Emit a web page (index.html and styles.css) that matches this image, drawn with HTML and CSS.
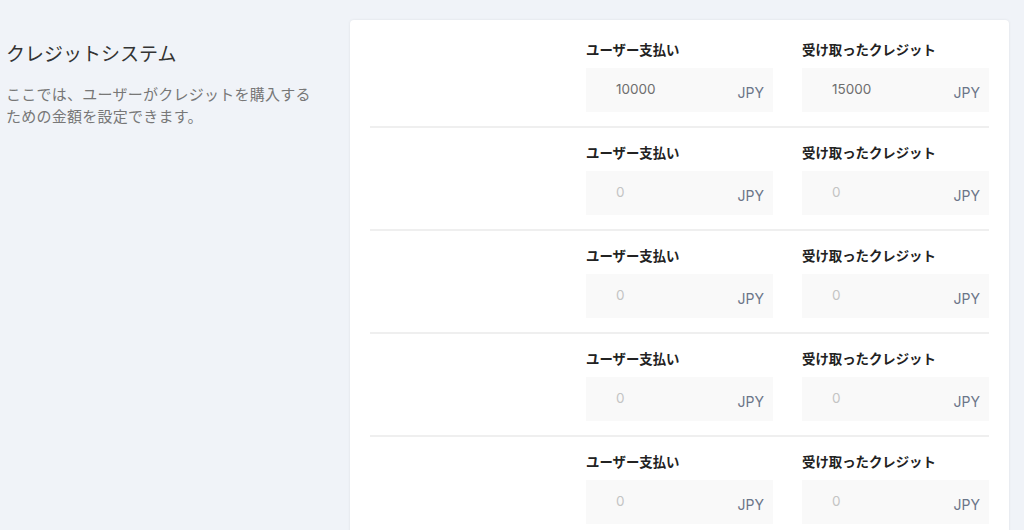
FILE: index.html
```html
<!DOCTYPE html>
<html lang="ja">
<head>
<meta charset="utf-8">
<title>クレジットシステム</title>
<link rel="stylesheet" href="styles.css">
</head>
<body>
<div class="page">
  <section class="intro">
    <h2 class="intro-title">クレジットシステム</h2>
    <p class="intro-text">ここでは、ユーザーがクレジットを購入するための金額を設定できます。</p>
  </section>
  <section class="card">
    <div class="row">
      <div class="field">
        <label class="field-label">ユーザー支払い</label>
        <div class="input"><span class="value">10000</span><span class="unit">JPY</span></div>
      </div>
      <div class="field">
        <label class="field-label">受け取ったクレジット</label>
        <div class="input"><span class="value">15000</span><span class="unit">JPY</span></div>
      </div>
    </div>
    <div class="row">
      <div class="field">
        <label class="field-label">ユーザー支払い</label>
        <div class="input"><span class="value placeholder">0</span><span class="unit">JPY</span></div>
      </div>
      <div class="field">
        <label class="field-label">受け取ったクレジット</label>
        <div class="input"><span class="value placeholder">0</span><span class="unit">JPY</span></div>
      </div>
    </div>
    <div class="row">
      <div class="field">
        <label class="field-label">ユーザー支払い</label>
        <div class="input"><span class="value placeholder">0</span><span class="unit">JPY</span></div>
      </div>
      <div class="field">
        <label class="field-label">受け取ったクレジット</label>
        <div class="input"><span class="value placeholder">0</span><span class="unit">JPY</span></div>
      </div>
    </div>
    <div class="row">
      <div class="field">
        <label class="field-label">ユーザー支払い</label>
        <div class="input"><span class="value placeholder">0</span><span class="unit">JPY</span></div>
      </div>
      <div class="field">
        <label class="field-label">受け取ったクレジット</label>
        <div class="input"><span class="value placeholder">0</span><span class="unit">JPY</span></div>
      </div>
    </div>
    <div class="row">
      <div class="field">
        <label class="field-label">ユーザー支払い</label>
        <div class="input"><span class="value placeholder">0</span><span class="unit">JPY</span></div>
      </div>
      <div class="field">
        <label class="field-label">受け取ったクレジット</label>
        <div class="input"><span class="value placeholder">0</span><span class="unit">JPY</span></div>
      </div>
    </div>
  </section>
</div>
</body>
</html>
```

FILE: styles.css
```css
html, body {
  margin: 0;
  padding: 0;
  height: 100%;
  overflow: hidden;
}
body {
  background: #f0f3f8;
  font-family: "Noto Sans CJK JP", "Noto Sans", sans-serif;
  color: #333;
}
.page {
  display: flex;
  align-items: flex-start;
  padding: 20px 15px 0 0;
  height: calc(100% + 40px);
  box-sizing: border-box;
}
.intro {
  width: 344px;
  padding-left: 6px;
  flex-shrink: 0;
}
.intro-title {
  margin: 19px 0 0;
  font-size: 19px;
  font-weight: 400;
  line-height: 28px;
  color: #333;
}
.intro-text {
  margin: 16px 0 0;
  width: 318px;
  font-size: 15px;
  letter-spacing: 0.25px;
  line-height: 22px;
  color: #777;
}
.card {
  flex: 1;
  align-self: stretch;
  background: #fff;
  border-radius: 4px;
  box-shadow: 0 0 3px rgba(0, 0, 0, 0.08);
  padding: 5px 20px 0;
  overflow: hidden;
}
.row {
  display: flex;
  justify-content: flex-end;
  gap: 29px;
  padding: 15px 0 14px;
  border-bottom: 2px solid #efefef;
}
.field {
  width: 187px;
  display: flex;
  flex-direction: column;
  gap: 10px;
}
.field-label {
  font-size: 13.4px;
  font-weight: 700;
  line-height: 18px;
  color: #222;
}
.input {
  height: 44px;
  background: #f9f9f9;
  display: flex;
  align-items: center;
  justify-content: space-between;
  padding: 0 9px 0 30px;
  box-sizing: border-box;
  font-family: "Inter", "Open Sans", sans-serif;
}
.value {
  font-size: 13.5px;
  color: #6e6e6e;
  margin-top: -3px;
}
.value.placeholder {
  color: #c4c4c4;
}
.unit {
  font-size: 14px;
  color: #6b7588;
  margin-top: 4px;
}
```
